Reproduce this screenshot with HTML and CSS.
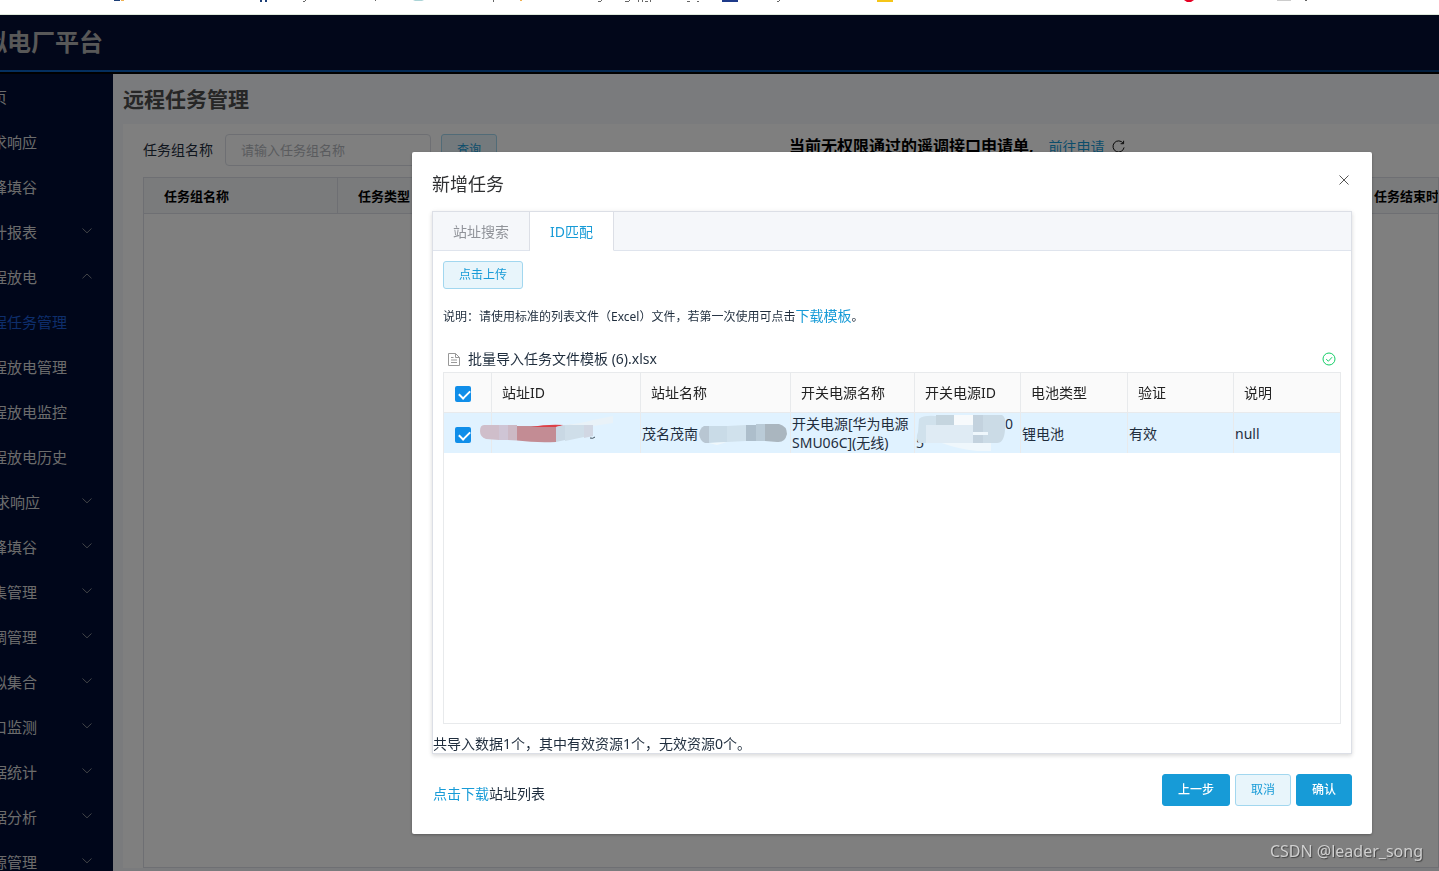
FILE: index.html
```html
<!DOCTYPE html>
<html lang="zh-CN">
<head>
<meta charset="utf-8">
<title>远程任务管理</title>
<link rel="stylesheet" href="styles.css">
</head>
<body>
<div class="bookmarks" aria-hidden="true">
  <svg width="1439" height="3" viewBox="0 0 1439 3">
    <path fill="#1d3f77" d="M114 0h6v1h-6zM260 0h2v2h-2zM265 0h2v2h-2z"/>
    <path fill="#f0b050" d="M121 0h3v1h-3zM520 0h2v1h-2z"/>
    <path fill="#666" d="M303 1h2v1h-2zM305 0h1v1h-1zM375 0h1v1h-1zM493 0h1v2h-1zM598 1h3v1h-3zM601 0h1v1h-1zM625 1h4v1h-4zM629 0h1v1h-1zM638 0h1v2h-1zM642 0h1v2h-1zM645 1h3v1h-3zM650 0h1v2h-1zM687 1h3v1h-3zM697 1h2v1h-2zM777 1h2v1h-2zM779 0h1v1h-1zM1305 0h2v1h-2z"/>
    <path fill="#abd4d7" d="M413 0h11l-2 1h-7z"/>
    <path fill="#1e3a8a" d="M722 0h16v2h-16z"/>
    <path fill="#f5c518" d="M877 0h16v2h-16z"/>
    <path fill="#e60023" d="M1184 0h10l-3 2h-4z"/>
    <path fill="#ccc" d="M1277 0h14v1h-14z"/>
  </svg>
</div>

<div class="app">
  <header class="app-header"><span class="brand">虚拟电厂平台</span></header>
  <div class="app-body">
    <nav class="sidebar">
      <a class="item" href="#">首页</a>
      <a class="item" href="#">需求响应</a>
      <a class="item" href="#">削峰填谷</a>
      <a class="item" href="#">统计报表<svg class="chev" viewBox="0 0 10 6"><path d="M.5 .5 5 4.800 9.500 .5"/></svg></a>
      <a class="item" href="#">远程放电<svg class="chev" viewBox="0 0 10 6"><path d="M.5 5.300 5 1 9.500 5.300"/></svg></a>
      <a class="item item-active" href="#">远程任务管理</a>
      <a class="item" href="#">远程放电管理</a>
      <a class="item" href="#">远程放电监控</a>
      <a class="item" href="#">远程放电历史</a>
      <a class="item item-nested" href="#">需求响应<svg class="chev" viewBox="0 0 10 6"><path d="M.5 .5 5 4.800 9.500 .5"/></svg></a>
      <a class="item" href="#">削峰填谷<svg class="chev" viewBox="0 0 10 6"><path d="M.5 .5 5 4.800 9.500 .5"/></svg></a>
      <a class="item" href="#">采集管理<svg class="chev" viewBox="0 0 10 6"><path d="M.5 .5 5 4.800 9.500 .5"/></svg></a>
      <a class="item" href="#">遥调管理<svg class="chev" viewBox="0 0 10 6"><path d="M.5 .5 5 4.800 9.500 .5"/></svg></a>
      <a class="item" href="#">虚拟集合<svg class="chev" viewBox="0 0 10 6"><path d="M.5 .5 5 4.800 9.500 .5"/></svg></a>
      <a class="item" href="#">接口监测<svg class="chev" viewBox="0 0 10 6"><path d="M.5 .5 5 4.800 9.500 .5"/></svg></a>
      <a class="item" href="#">数据统计<svg class="chev" viewBox="0 0 10 6"><path d="M.5 .5 5 4.800 9.500 .5"/></svg></a>
      <a class="item" href="#">数据分析<svg class="chev" viewBox="0 0 10 6"><path d="M.5 .5 5 4.800 9.500 .5"/></svg></a>
      <a class="item" href="#">资源管理<svg class="chev" viewBox="0 0 10 6"><path d="M.5 .5 5 4.800 9.500 .5"/></svg></a>
    </nav>
    <main class="main">
      <h1 class="page-title">远程任务管理</h1>
      <section class="card">
        <div class="filters">
          <div class="search">
            <label for="group">任务组名称</label>
            <input id="group" class="field" type="text" placeholder="请输入任务组名称">
            <button class="btn btn-plain" type="button">查询</button>
          </div>
          <div class="notice">
            <strong>当前无权限通过的遥调接口申请单,</strong>
            <a class="link" href="#">前往申请</a>
            <svg class="refresh" viewBox="0 0 14 14"><path d="M12 3.500A6 6 0 1 0 13 8M12.500 .8v3.200H9.300"/></svg>
          </div>
        </div>
        <div class="list">
          <table class="list-table">
            <colgroup><col class="l-name"><col class="l-type"><col></colgroup>
            <thead><tr><th>任务组名称</th><th>任务类型</th><th>任务结束时间</th></tr></thead>
          </table>
        </div>
      </section>
    </main>
  </div>
</div>

<div class="overlay">
  <div class="dialog" role="dialog" aria-labelledby="dlg-title">
    <div class="dialog-head">
      <h2 id="dlg-title">新增任务</h2>
      <button class="close" type="button" aria-label="关闭"><svg viewBox="0 0 10 10"><path d="M.5 .5l9 9M9.500 .5l-9 9"/></svg></button>
    </div>
    <div class="tabs">
      <div class="tab-bar" role="tablist">
        <button class="tab" type="button" role="tab">站址搜索</button>
        <button class="tab tab-on" type="button" role="tab" aria-selected="true">ID匹配</button>
      </div>
      <div class="pane">
        <button class="btn btn-plain btn-small" type="button">点击上传</button>
        <p class="hint">说明：请使用标准的列表文件（Excel）文件，若第一次使用可点击<a class="link" href="#">下载模板</a>。</p>
        <div class="file">
          <svg class="doc" viewBox="0 0 12 13"><path d="M.5 .5h7l4 4v8H.5zM7.500 .5v4h4M3 4.500h2.500M3 7h6M3 9.500h6"/></svg>
          <span>批量导入任务文件模板 (6).xlsx</span>
          <svg class="ok" viewBox="0 0 14 14"><circle cx="7" cy="7" r="6"/><path d="M4.200 7.200l2.200 2 3.700-4"/></svg>
        </div>
        <div class="grid">
          <table class="grid-table">
            <colgroup><col class="c-check"><col class="c-id"><col class="c-name"><col class="c-power"><col class="c-pid"><col class="c-batt"><col class="c-valid"><col></colgroup>
            <thead>
              <tr><th><input class="check" type="checkbox" checked aria-label="全选"></th><th>站址ID</th><th>站址名称</th><th>开关电源名称</th><th>开关电源ID</th><th>电池类型</th><th>验证</th><th>说明</th></tr>
            </thead>
            <tbody>
              <tr>
                <td class="pick"><input class="check" type="checkbox" checked aria-label="选择此行"></td>
                <td>
                  <svg class="smear smear-id" width="136" height="28" viewBox="0 0 136 28" aria-hidden="true">
                    <path fill="#cfbeca" d="M20 9H5Q1 9 1 15Q1 21 7 23L20 24z"/>
                    <path fill="#cfc5d5" d="M20 9h9v15h-9z"/><path fill="#ccb9c5" d="M29 9h9v15.500l-9-.5z"/>
                    <path fill="#c38c94" d="M38 10h39v16q-20 1-39-1.500z"/>
                    <path fill="#dd4148" d="M52 11q16-3 33-2l-8 2H52z"/>
                    <path fill="#c9d8e4" d="M77 11l9-2v15l-9 2z"/><path fill="#cfdee9" d="M86 9l19-1v13l-19 4z"/>
                    <path fill="#d1d7e3" d="M105 8l9-1v13l-9 2z"/><path fill="#e9f2f8" d="M86 9q18-2 28-5l20-4v7l-20 3v-1z"/>
                    <path fill="none" stroke="#40505c" d="M111 22q3 1 5-1"/>
                  </svg>
                </td>
                <td>茂名茂南
                  <svg class="smear smear-name" width="90" height="22" viewBox="0 0 90 22" aria-hidden="true">
                    <path fill="#b8c6d2" d="M11 3H6Q2 5 1 11Q2 18 7 20h4z"/><path fill="#c9dbe7" d="M11 3h18v16l-18 1z"/>
                    <path fill="#d0e1ec" d="M29 3l19-1v16l-19 1z"/><path fill="#adbecb" d="M48 2h10v16H48z"/>
                    <path fill="#bacbd7" d="M58 1h9v17h-9z"/><path fill="#aab6bf" d="M67 1h14q8 2 8 10q-2 9-10 8l-12-1z"/>
                    <path fill="#f0f8fc" d="M11 20l18-1-10 3z"/>
                  </svg>
                </td>
                <td>开关电源[华为电源SMU06C](无线)</td>
                <td class="masked"><span>0</span><span>5</span>
                  <svg class="smear smear-pid" width="98" height="36" viewBox="0 0 98 36" aria-hidden="true">
                    <path fill="#d0e1ec" d="M4 4q4-4 17-3v9h20V1h19v9H60v18H4q-4-4-1-11z"/>
                    <path fill="#c5d5df" d="M21 0h18v10H21z"/><path fill="#f7fafc" d="M39 0h19v10H39z"/>
                    <path fill="#c3d2de" d="M58 0h10v28H58z"/><path fill="#cbdbe6" d="M68 0h19q5 3 3 15-1 13-8 13H68z"/>
                    <path fill="#dfebf4" d="M11 10h47v18H11z"/><path fill="#eff7fc" d="M27 28h49v8H62Q43 34 27 28zM58 17h15v3H58z"/>
                  </svg>
                </td>
                <td>锂电池</td><td>有效</td><td>null</td>
              </tr>
            </tbody>
          </table>
        </div>
      </div>
      <p class="summary">共导入数据1个，其中有效资源1个，无效资源0个。</p>
    </div>
    <div class="dialog-foot">
      <p class="download"><a class="link" href="#">点击下载</a>站址列表</p>
      <div class="actions">
        <button class="btn btn-solid" type="button">上一步</button>
        <button class="btn btn-plain" type="button">取消</button>
        <button class="btn btn-solid" type="button">确认</button>
      </div>
    </div>
  </div>
</div>
<div class="watermark">CSDN @leader_song</div>
</body>
</html>
```
FILE: styles.css
```css
* { box-sizing: border-box; }

body {
  margin: 0;
  height: 100vh;
  display: flex;
  flex-direction: column;
  overflow: hidden;
  background: #fff;
  color: #1f2d3d;
  font: 14px/20px "Noto Sans", "Noto Sans CJK SC", sans-serif;
}
h1, h2, p { margin: 0; }
button, input { font-family: inherit; }
svg { flex: none; fill: none; stroke: currentColor; }

.bookmarks { height: 15px; flex: none; border-bottom: 1px solid #dfe9dc; overflow: hidden; }
.bookmarks svg { display: block; stroke: none; }

/* The sidebar is scrolled partly out of the left edge. */
.app { flex: 1; min-height: 0; display: flex; flex-direction: column; margin-left: -87px; }
.app-header {
  flex: none;
  display: flex;
  align-items: center;
  height: 59px;
  padding: 0 0 4px 46px;
  background: linear-gradient(90deg, #0a62c4, #053c7c) left bottom / 100% 2px no-repeat #040f34;
  border-bottom: 2px solid #000;
}
.brand { color: #b0b0b0; font-size: 24px; font-weight: 700; line-height: 32px; }
.app-body { flex: 1; min-height: 0; display: flex; }

.sidebar { flex: none; width: 200px; background: #000d34; overflow: hidden; }
.item {
  display: flex;
  align-items: center;
  justify-content: space-between;
  height: 45px;
  padding: 0 21px 0 64px;
  color: #d8d8d8;
  font-size: 15px;
  text-decoration: none;
}
.item-nested { padding-left: 67px; }
.item-active { color: #1c5cd6; }
.chev { width: 10px; height: 6px; color: #858991; margin-bottom: 2px; }

.main { flex: 1; min-width: 0; display: flex; flex-direction: column; background: #f5f7fa; padding: 0 0 3px 10px; }
.page-title { height: 50px; color: #4c4c4c; font-size: 21px; line-height: 50px; }
.card { flex: 1; display: flex; flex-direction: column; background: #fff; padding: 10px 0 0 20px; }
.filters { display: flex; align-items: flex-start; height: 43px; }
.search { display: flex; align-items: center; width: 646px; }
.search label { width: 82px; }
.field {
  width: 206px;
  height: 32px;
  margin-right: 10px;
  padding: 0 15px;
  border: 1px solid #dcdfe6;
  border-radius: 4px;
  font-size: 13px;
}
.field::placeholder { color: #b4b7bd; }
.notice { display: flex; align-items: center; color: #000; line-height: 22px; }
.notice strong { font-size: 16px; margin-right: 15px; }
.notice .link { margin-right: 7px; padding-top: 2px; }
.refresh { width: 13px; height: 13px; }
.list { flex: 1; border: 1px solid #dcdfe6; overflow: hidden; }
.list-table { width: 100%; min-width: 1400px; table-layout: fixed; border-collapse: separate; border-spacing: 0; }
.l-name { width: 194px; }
.l-type { width: 1016px; }
.list-table th {
  height: 36px;
  padding: 0 20px;
  background: #f4f6f9;
  border-right: 1px solid #dcdfe6;
  border-bottom: 1px solid #dcdfe6;
  color: #000;
  font-size: 13px;
  text-align: left;
}

.link { color: #179bd7; font-size: 14px; text-decoration: none; }
.btn { height: 32px; padding: 0 15px; border: 1px solid #179bd7; border-radius: 3px; font-size: 12px; line-height: 16px; }
.btn-plain { background: #e8f5fb; border-color: #a2d7ef; color: #179bd7; }
.btn-solid { background: #179bd7; color: #fff; font-weight: 500; }
.btn-small { display: block; height: 28px; }

.overlay {
  position: fixed;
  inset: 15px 0 0;
  display: flex;
  align-items: flex-start;
  justify-content: center;
  padding: 137px 0 0 345px;
  background: rgba(0, 0, 0, .5);
}
.dialog { width: 960px; padding: 0 20px 28px; background: #fff; border-radius: 2px; box-shadow: 0 1px 3px rgba(0, 0, 0, .3); }
.dialog-head { display: flex; align-items: center; justify-content: space-between; height: 59px; padding-top: 5px; }
.dialog-head h2 { color: #303133; font-size: 18px; font-weight: 400; line-height: 24px; }
.close { display: flex; padding: 3px; margin-bottom: 8px; border: 0; background: none; color: #555; }
.close svg { width: 10px; height: 10px; }

.tabs { border: 1px solid #dcdfe6; box-shadow: 0 2px 4px rgba(0, 0, 0, .12), 0 0 6px rgba(0, 0, 0, .04); }
.tab-bar { display: flex; height: 39px; background: #f5f7fa; border-bottom: 1px solid #dfe4ed; }
.tab { height: 39px; padding: 0 20px; border: 0; border-right: 1px solid #dcdfe6; border-bottom: 1px solid #dfe4ed; background: none; color: #909399; font-size: 14px; }
.tab-on { background: #fff; border-bottom-color: #fff; color: #179bd7; }
.pane { padding: 10px; }
.hint { margin-top: 15px; font-size: 12px; line-height: 24px; }
.file { display: flex; align-items: center; height: 26px; margin-top: 17px; padding: 0 5px; }
.doc { width: 12px; height: 13px; margin-right: 8px; color: #999; }
.ok { width: 14px; height: 14px; margin-left: auto; color: #13ce66; }

.grid { min-height: 352px; border: 1px solid #e8eaec; }
.grid-table { width: 100%; table-layout: fixed; border-collapse: separate; border-spacing: 0; line-height: 19px; }
.c-check { width: 48px; }
.c-id { width: 149px; }
.c-name { width: 150px; }
.c-power { width: 124px; }
.c-pid, .c-valid { width: 106px; }
.c-batt { width: 107px; }
.grid-table th, .grid-table td { border-right: 1px solid #e8eaec; text-align: left; }
.grid-table th:last-child, .grid-table td:last-child { border-right: 0; }
.grid-table th { height: 40px; padding: 0 10px; background: #fafafa; border-bottom: 1px solid #e8eaec; color: #222; font-weight: 400; }
.grid-table td { position: relative; height: 40px; padding: 0 1px; background: #e0f2ff; }
.grid-table td.pick { padding: 0 10px; }
.masked span { display: block; }
.masked span:first-child { text-align: right; padding-right: 6px; }

.check {
  appearance: none;
  display: block;
  width: 16px;
  height: 16px;
  margin: 3px 0 0 1px;
  border-radius: 2px;
  background: #108ee9;
}
.check::after {
  content: "";
  display: block;
  width: 9px;
  height: 5px;
  margin: 4px 0 0 4px;
  border: solid #fff;
  border-width: 0 0 2px 2px;
  transform: rotate(-45deg);
}

.smear { position: absolute; stroke: none; z-index: 1; }
.smear-id { left: -13px; top: 3px; }
.smear-name { left: 57px; top: 10px; }
.smear-pid { left: 0; top: 2px; }

.summary { line-height: 19px; }
.dialog-foot { display: flex; justify-content: space-between; padding-top: 20px; }
.download { padding: 10px 0 0 1px; }
.actions { display: flex; gap: 5px; }

.watermark {
  position: fixed;
  right: 16px;
  bottom: 9px;
  color: #d0d0d0;
  font-size: 16px;
  line-height: 22px;
  text-shadow: 1px 1px 1px #444;
}
```
